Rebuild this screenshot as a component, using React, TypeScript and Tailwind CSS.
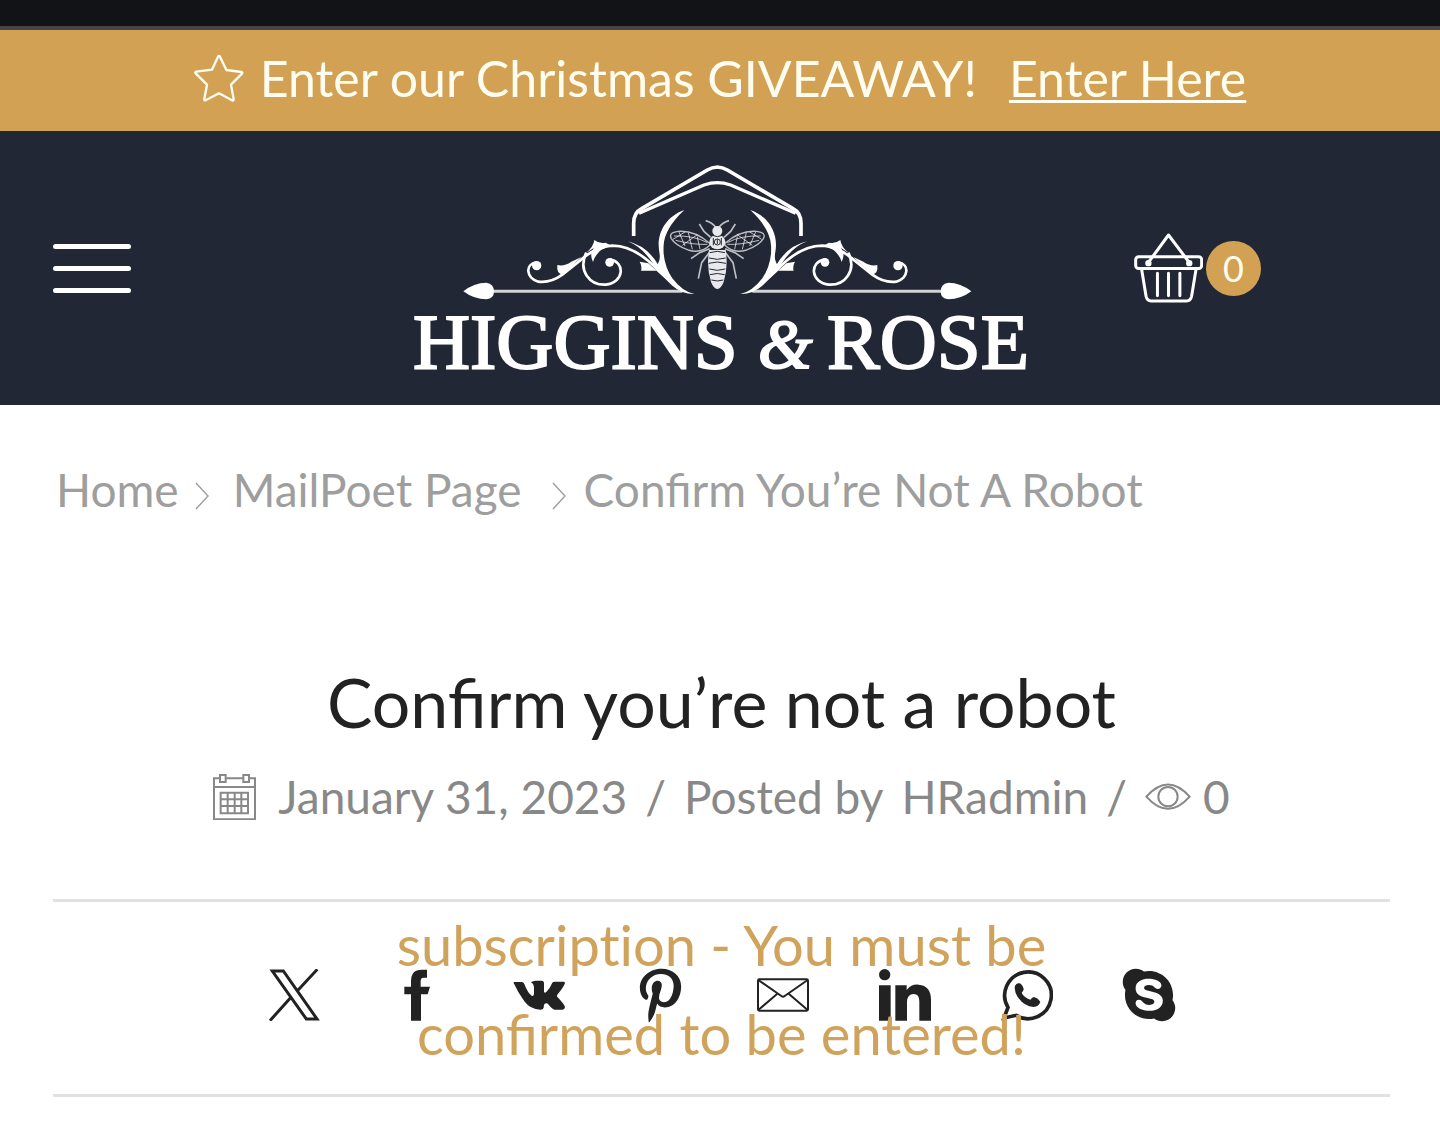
import type { ReactNode } from 'react'
import { FaPinterestP, FaSkype } from 'react-icons/fa'

interface ShareLink {
  label: string
  icon: ReactNode
}

function StarIcon() {
  return (
    <svg viewBox="50 163 150 145" className="w-[50px] shrink-0" fill="none" stroke="currentColor" strokeWidth="7" strokeLinejoin="round" aria-hidden="true">
      <path d="M122 171q3-5 6 0l19 40 45 6q5 1 2 5l-33 33 8 44q0 5-5 3l-39-21-40 21q-5 1-4-4l8-43-34-34q-3-4 2-5l47-6z" />
    </svg>
  )
}

function BasketIcon() {
  return (
    <svg viewBox="72 40 206 208" className="w-[69px] shrink-0" fill="none" stroke="currentColor" strokeWidth="9" strokeLinecap="round" strokeLinejoin="round" aria-hidden="true">
      <rect x="77" y="111" width="197" height="35" rx="9" />
      <path d="M115 128l60-82 62 82" />
      <circle cx="115" cy="130" r="5" />
      <circle cx="237" cy="130" r="5" />
      <path d="M95 150l13 79q3 14 15 14h106q12 0 15-14l13-79M142 160v67M175 160v67M209 160v67" />
    </svg>
  )
}

function CalendarIcon() {
  return (
    <svg viewBox="39 39 129 139" className="w-[43px] shrink-0" fill="none" stroke="currentColor" strokeWidth="6" aria-hidden="true">
      <path d="M59 52H42v123h123V52h-17M78 52h51M42 78h123M60 42h17v21H60zM130 42h17v21h-17z" />
      <path d="M62 95h82v62H62zM83 95v62M104 95v62M124 95v62M62 115h82M62 135h82" />
    </svg>
  )
}

function EyeIcon() {
  return (
    <svg viewBox="163 67 138 83" className="w-[46px] shrink-0" fill="none" stroke="currentColor" strokeWidth="6" aria-hidden="true">
      <path d="M167 108q65-73 130 0-65 73-130 0z" />
      <circle cx="232" cy="108" r="29" />
    </svg>
  )
}

function Chevron() {
  return (
    <svg viewBox="0 0 14 28" className="mt-3 w-[14px] shrink-0" fill="none" stroke="currentColor" strokeWidth="1.4" aria-hidden="true">
      <path d="M1 1l12 13L1 27" />
    </svg>
  )
}

function XIcon() {
  return (
    <svg viewBox="58 177 156 156" className="size-[52px]" fill="none" stroke="currentColor" strokeWidth="9" aria-hidden="true">
      <path d="M68 183h33l101 144h-32zM203 178l-61 66M122 264l-61 68" />
    </svg>
  )
}

function FacebookIcon() {
  return (
    <svg viewBox="420 178 156 156" className="size-[52px]" fill="currentColor" aria-hidden="true">
      <path d="M480 333v-79h-20v-23h20v-17q0-34 32-34h16v24h-10q-9 0-9 10v17h28l-7 23h-20v79z" />
    </svg>
  )
}

function VkIcon() {
  return (
    <svg viewBox="786 178 156 156" className="size-[52px]" fill="currentColor" aria-hidden="true">
      <path d="M788 217h24q6 0 8 6 10 27 23 36 6 1 6-9v-18q-1-10-9-14 5-5 15-5h17q7 0 7 8v25q2 6 7 1 12-13 18-28 2-3 7-3h27q6 1 3 7-6 13-21 31-4 5 0 9 20 21 22 29 0 7-7 8h-24q-7-1-18-15-7-8-13-1-2 4-2 10-1 6-10 6-30 0-48-25-20-28-32-55z" />
    </svg>
  )
}

function MailIcon() {
  return (
    <svg viewBox="528 178 156 156" className="size-[52px]" fill="none" stroke="currentColor" strokeWidth="6" strokeLinejoin="round" aria-hidden="true">
      <rect x="531" y="209" width="150" height="94" rx="4" />
      <path d="M532 211l69 48q5 4 10 0l69-48M532 301l57-49M680 301l-57-49" />
    </svg>
  )
}

function LinkedinIcon() {
  return (
    <svg viewBox="53 178 156 156" className="size-[52px]" fill="currentColor" aria-hidden="true">
      <circle cx="70" cy="195" r="17" />
      <path d="M53 227h35v106H53zM102 227h34v14q14-18 36-16 37 3 37 46v62h-35v-58q0-22-17-22-19 0-20 24v56h-35z" />
    </svg>
  )
}

function WhatsappIcon() {
  return (
    <svg viewBox="420 178 156 156" className="size-[52px]" aria-hidden="true">
      <path d="M429 325l12-32A70 70 0 1 1 465 317z" fill="none" stroke="currentColor" strokeWidth="11" />
      <path d="M462 228q6-9 14-7 8 3 12 17 1 4-6 11 6 14 26 21 6-8 11-8 13 4 19 14-4 14-20 16-28-2-45-26-15-20-11-38z" fill="currentColor" />
    </svg>
  )
}

// one half of the crest, reused mirrored for the other side
function CrestHalf() {
  return (
    <g fill="#fff">
      <g fill="none" stroke="#fff">
        <path d="M704 258v-38q0-32 24-44L925 60q14-8 31-9" strokeWidth="11" />
        <path d="M720 190l195-85q20-7 41-7" strokeWidth="10" />
        <path d="M835 412l-55-48Q710 287 640 287q-42 1-85 35l-65 52q-36 26-72 21C380 384 378 341 412 338" strokeWidth="8" />
        <path d="M562 308C536 362 572 406 620 404 676 399 680 334 632 329" strokeWidth="8" />
        <path d="M280 424h570" strokeWidth="9" strokeOpacity=".8" />
      </g>
      <path d="M856 180C805 198 779 240 779 285c0 20 7 33 1 49l-10 24 50 49q30 26 66 25-36-7-66-47-30-45-26-100 3-50 62-105z" />
      <path d="M686 274q59 14 92 71l-3 19q-35-69-89-90z" />
      <path d="M722 335q8 14 4 27h47l-25-22z" />
      <path d="M475 345q20 5 42-10l30-14-57 53q-18-4-15-29z" />
      <path d="M586 270q14 12 34 8l18 10q-44 8-56 48-12-24 2-42l-24 16q24-20 26-40z" />
      <circle cx="413" cy="347" r="14" />
      <circle cx="632" cy="337" r="13" />
      <path d="M193 424q32-26 69-26 23 4 23 26t-23 24q-37 0-69-24z" />
    </g>
  )
}

function BeeHalf() {
  return (
    <g fill="none" stroke="#fff" strokeWidth="4" strokeOpacity=".7">
      <path d="M932 280q-45-40-95-36-30 4-20 22 12 20 50 34 40 12 65-14z" />
      <path d="M925 278q-40-22-100-20M925 283q-40 2-95-12M840 246l18 42M868 248l12 50M895 260l8 38M850 286l45-32M822 268l36-22" strokeWidth="3" />
      <path d="M950 232q-10-14-30-20M935 262l-20-18-14-22M932 296l-30 12-26 18M932 306l-24 32-10 48" strokeWidth="5" />
    </g>
  )
}

function Logo() {
  return (
    <svg viewBox="0 0 616 204" className="h-auto w-full overflow-visible" role="img" aria-label="Higgins & Rose">
      <g transform="translate(-13 -16) scale(.33333)">
        <CrestHalf />
        <BeeHalf />
        <g transform="translate(1910 0) scale(-1 1)">
          <CrestHalf />
          <BeeHalf />
        </g>
        <g fill="#e8e9ec">
          <circle cx="955" cy="243" r="15" />
          <ellipse cx="955" cy="276" rx="24" ry="22" />
          <path d="M930 300h50q8 52-6 96-8 20-19 21-11-1-19-21-14-44-6-96z" />
        </g>
        <g fill="none" stroke="#212734" strokeWidth="3">
          <path d="M932 308q23-8 46 0M930 324q25 8 50 0M929 340q26-8 52 0M931 357q24 8 48 0M933 374q22-7 44 0M937 390q18 6 36 0M940 256q15 8 30 0" />
          <circle cx="955" cy="276" r="9" />
          <path d="M955 268v14M943 264v22M967 264v22" />
        </g>
      </g>
      <g fill="#fff" stroke="#fff" strokeWidth="2" fontFamily="'Liberation Serif', serif" fontSize="79">
        <text x="1" y="202">HIGGINS</text>
        <text x="346" y="202" fontStyle="italic" fontSize="70">&amp;</text>
        <text x="415" y="202">ROSE</text>
      </g>
    </svg>
  )
}

const shareLinks: ShareLink[] = [
  { label: 'X', icon: <XIcon /> },
  { label: 'Facebook', icon: <FacebookIcon /> },
  { label: 'VK', icon: <VkIcon /> },
  { label: 'Pinterest', icon: <FaPinterestP className="size-[55px] shrink-0" /> },
  { label: 'Email', icon: <MailIcon /> },
  { label: 'LinkedIn', icon: <LinkedinIcon /> },
  { label: 'WhatsApp', icon: <WhatsappIcon /> },
  { label: 'Skype', icon: <FaSkype className="size-[60px] shrink-0" /> },
]

export default function App() {
  return (
    <div className="min-h-screen bg-white font-['Lato',sans-serif]">
      <div className="h-[30px] border-b-4 border-[#454448] bg-[#121317]" />

      <div className="flex items-center justify-center bg-[#d2a154] pt-4 pb-[21px] text-[50px] leading-[64px] text-[#fffdf0]">
        <StarIcon />
        <p className="ml-4">Enter our Christmas GIVEAWAY!</p>
        <a href="#giveaway" className="ml-8 underline decoration-[3px] underline-offset-[3px]">Enter Here</a>
      </div>

      <header className="grid grid-cols-[1fr_616px_1fr] items-center bg-[#212734] px-[53px] py-[35px] text-white">
        <button type="button" aria-label="Menu" className="flex w-[78px] flex-col gap-[17px]">
          <span className="h-[5px] rounded-full bg-white" />
          <span className="h-[5px] rounded-full bg-white" />
          <span className="h-[5px] rounded-full bg-white" />
        </button>
        <a href="#home">
          <Logo />
        </a>
        <a href="#cart" aria-label="Cart" className="ml-[106px] flex items-center gap-[3px]">
          <BasketIcon />
          <span className="flex size-[55px] items-center justify-center rounded-full bg-[#d2a154] text-[36px] leading-none text-[#fffdf0]">0</span>
        </a>
      </header>

      <main className="pr-[50px] pl-[53px]">
        <nav aria-label="Breadcrumb" className="flex items-center pt-[53px] pl-[3px] text-[46px] leading-[64px] text-[#9e9e9e]">
          <a href="#home" className="mr-4">Home</a>
          <Chevron />
          <a href="#mailpoet" className="mr-[30px] ml-6">MailPoet Page</a>
          <Chevron />
          <span className="ml-[18px]">Confirm You’re Not A Robot</span>
        </nav>

        <h1 className="mt-[134px] text-center text-[68px] leading-[92px] text-[#222]">Confirm you’re not a robot</h1>

        <div className="mt-[17px] flex items-center justify-center text-[46px] leading-[64px] text-[#888]">
          <CalendarIcon />
          <time dateTime="2023-01-31" className="ml-[22px]">January 31, 2023</time>
          <span className="mx-[18px]">/</span>
          <span>Posted by</span>
          <a href="#author" className="ml-[18px]">HRadmin</a>
          <span className="mx-[18px]">/</span>
          <EyeIcon />
          <span className="ml-3">0</span>
        </div>

        <section className="relative mt-[70px] border-y-[3px] border-[#e1e1e1] pt-[67px] pb-[73px]">
          <ul className="flex justify-center gap-[70px] text-[#222]">
            {shareLinks.map((link) => (
              <li key={link.label}>
                <a href="#share" aria-label={link.label} className="flex size-[52px] items-center justify-center">
                  {link.icon}
                </a>
              </li>
            ))}
          </ul>
          <p className="pointer-events-none absolute inset-x-0 -top-0.5 text-center text-[56px] leading-[89px] text-[#d0a35c]">
            <span className="[font-variant-ligatures:none]">subscription</span> - You must be
            <br />
            confirmed to be entered!
          </p>
        </section>
      </main>
    </div>
  )
}
